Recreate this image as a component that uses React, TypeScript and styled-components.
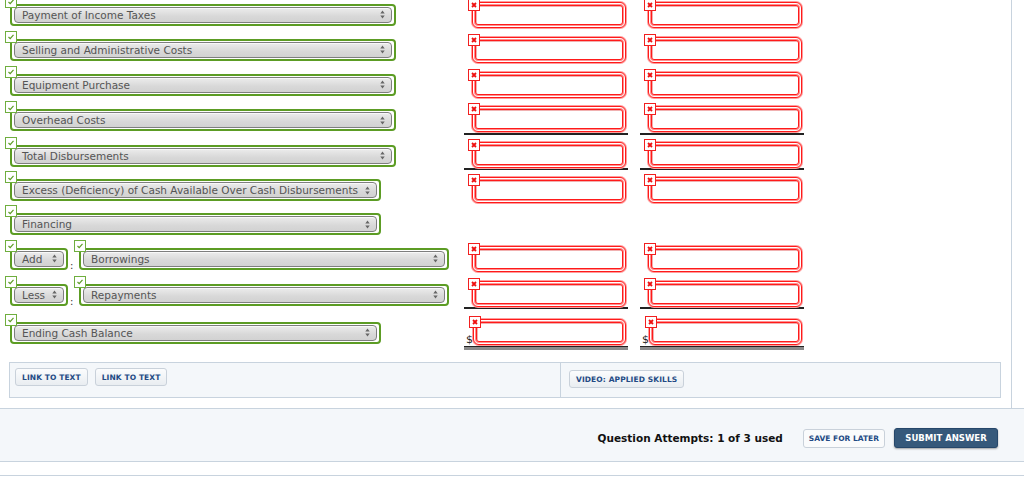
import styled, { createGlobalStyle } from "styled-components";

const GlobalStyle = createGlobalStyle`
  html, body {
    margin: 0;
    padding: 0;
    background: #fff;
    overflow: hidden;
  }
  body {
    font-family: "DejaVu Sans", Verdana, sans-serif;
  }
`;

const Page = styled.div`
  width: 1024px;
  height: 477px;
  overflow: hidden;
`;

const Content = styled.div`
  width: 1011px;
  border-right: 1px solid #c8d3de;
  padding-bottom: 10px;
`;

const Sheet = styled.div`
  margin-top: -3px;
  padding-left: 10px;
`;

const Row = styled.div<{ h: number }>`
  display: grid;
  grid-template-columns: 442px 164px 164px;
  column-gap: 12px;
  align-items: center;
  height: ${(p) => p.h}px;
`;

const LabelCell = styled.div`
  display: flex;
  align-items: center;
  height: 29px;
`;

const ValueCell = styled.div<{ line?: "single" | "double" }>`
  display: flex;
  align-items: center;
  height: 29px;
  padding: 0 2px;
  box-sizing: border-box;
  border-bottom: ${(p) =>
    p.line === "single"
      ? "2px solid #222"
      : p.line === "double"
      ? "1px solid #222"
      : "none"};
  box-shadow: ${(p) => (p.line === "double" ? "0 3px 0 #8a8a8a" : "none")};
`;

const GreenWrap = styled.div<{ w: number }>`
  position: relative;
  width: ${(p) => p.w}px;
  height: 22px;
  box-sizing: border-box;
  border: 2px solid #5c9c24;
  border-radius: 4px;
  padding: 1px 2px;
`;

const Badge = styled.span<{ tone: "ok" | "bad" }>`
  position: absolute;
  width: 12px;
  height: 12px;
  box-sizing: border-box;
  background: #fff;
  border: 1px solid ${(p) => (p.tone === "ok" ? "#6fae3e" : "#f21f1f")};
  left: ${(p) => (p.tone === "ok" ? "-7px" : "-5px")};
  top: ${(p) => (p.tone === "ok" ? "-10px" : "-4px")};
  display: flex;
  align-items: center;
  justify-content: center;
  z-index: 1;
`;

const SelectBox = styled.div`
  display: flex;
  align-items: center;
  justify-content: space-between;
  height: 16px;
  box-sizing: border-box;
  padding: 0 6px 0 7px;
  border: 1px solid #7e7e7e;
  border-radius: 4px;
  background: linear-gradient(#ececec, #d8d8d8 60%, #d2d2d2);
  box-shadow: inset 0 1px 0 #f8f8f8;
  color: #555;
  font-size: 10.5px;
  white-space: nowrap;
`;

const Colon = styled.span`
  align-self: flex-end;
  width: 11px;
  padding-left: 2px;
  box-sizing: border-box;
  font-size: 10px;
  color: #333;
  line-height: 10px;
  margin-bottom: 2px;
`;

const RedWrap = styled.div`
  position: relative;
  margin-left: auto;
  width: 154px;
  height: 26px;
  box-sizing: border-box;
  border: 1px solid #ff1a1a;
  border-radius: 6px;
  padding: 2px;
  background: #fff;
  box-shadow: 0 0 0 1px #ff9c9c;
`;

const Field = styled.div`
  height: 100%;
  box-sizing: border-box;
  border: 1px solid #ff1a1a;
  border-radius: 3px;
  box-shadow: 0 0 0 1px #ff8f8f, inset 1px 1px 0 #f0b0b0;
  background: #fff;
`;

const Dollar = styled.span`
  align-self: flex-end;
  font-size: 11px;
  line-height: 11px;
  color: #222;
  margin-bottom: 1px;
`;

const Panel = styled.div`
  margin: 10px 10px 0 9px;
  display: grid;
  grid-template-columns: 550px 1fr;
  height: 36px;
  box-sizing: border-box;
  border: 1px solid #c8d3de;
  background: #f4f7fa;
`;

const PanelSection = styled.div<{ divided?: boolean }>`
  display: flex;
  align-items: flex-start;
  gap: 7px;
  padding: ${(p) => (p.divided ? "7px 8px" : "5px 5px")};
  border-left: ${(p) => (p.divided ? "1px solid #c8d3de" : "none")};
`;

const LinkButton = styled.button`
  font-family: "DejaVu Sans", Verdana, sans-serif;
  font-weight: bold;
  font-size: 7.5px;
  color: #234a84;
  height: 18px;
  padding: 0 6px;
  border: 1px solid #c9d1da;
  border-radius: 3px;
  background: linear-gradient(#fbfcfd, #e9edf1);
  letter-spacing: 0.1px;
`;

const Footer = styled.div`
  display: flex;
  align-items: center;
  justify-content: flex-end;
  gap: 9px;
  height: 54px;
  box-sizing: border-box;
  padding: 6px 26px 0 0;
  background: #f4f7fa;
  border-top: 1px solid #c8d3de;
  border-bottom: 1px solid #c8d3de;
`;

const Attempts = styled.span`
  font-size: 10.5px;
  font-weight: bold;
  color: #111;
  margin-right: 11px;
`;

const SaveButton = styled.button`
  font-family: "DejaVu Sans", Verdana, sans-serif;
  font-weight: bold;
  font-size: 7.5px;
  color: #234a84;
  height: 19px;
  padding: 0 5px;
  border: 1px solid #c9d1da;
  border-radius: 3px;
  background: #fafbfc;
`;

const SubmitButton = styled.button`
  font-family: "DejaVu Sans", Verdana, sans-serif;
  font-weight: bold;
  font-size: 8.5px;
  color: #fff;
  height: 20px;
  width: 104px;
  border: 1px solid #26476a;
  border-radius: 3px;
  background: #36597b;
  box-shadow: 0 1px 2px rgba(0, 0, 0, 0.35);
`;

const BottomStrip = styled.div`
  height: 13px;
  border-bottom: 1px solid #c8d3de;
`;

type Line = "single" | "double";

interface SheetRow {
  label: string;
  width: number;
  h: number;
  prefix?: string;
  inputs?: boolean;
  line?: Line;
  dollar?: boolean;
}

const rows: SheetRow[] = [
  { label: "Payment of Income Taxes", width: 386, h: 35, inputs: true },
  { label: "Selling and Administrative Costs", width: 386, h: 35, inputs: true },
  { label: "Equipment Purchase", width: 386, h: 35, inputs: true },
  { label: "Overhead Costs", width: 386, h: 36, inputs: true, line: "single" },
  { label: "Total Disbursements", width: 386, h: 35, inputs: true, line: "single" },
  {
    label: "Excess (Deficiency) of Cash Available Over Cash Disbursements",
    width: 371,
    h: 34,
    inputs: true
  },
  { label: "Financing", width: 371, h: 34 },
  { prefix: "Add", label: "Borrowings", width: 370, h: 35, inputs: true },
  {
    prefix: "Less",
    label: "Repayments",
    width: 370,
    h: 37,
    inputs: true,
    line: "single"
  },
  {
    label: "Ending Cash Balance",
    width: 371,
    h: 39,
    inputs: true,
    line: "double",
    dollar: true
  }
];

const Check = () => (
  <svg width="8" height="7" viewBox="0 0 8 7">
    <polyline
      points="1.5,4 3.2,5.6 6.5,1.8"
      fill="none"
      stroke="#5c9c24"
      strokeWidth="1.2"
    />
  </svg>
);

const Cross = () => (
  <svg width="6" height="6" viewBox="0 0 6 6">
    <path d="M1 1 L5 5 M5 1 L1 5" stroke="#ee1111" strokeWidth="1.8" />
  </svg>
);

const Arrows = () => (
  <svg width="5" height="9" viewBox="0 0 5 9">
    <path d="M2.5 0.5 L4.7 3.5 H0.3 Z M2.5 8.5 L4.7 5.5 H0.3 Z" fill="#666" />
  </svg>
);

function Dropdown({ text, width }: { text: string; width: number }) {
  return (
    <GreenWrap w={width}>
      <Badge tone="ok">
        <Check />
      </Badge>
      <SelectBox>
        <span>{text}</span>
        <Arrows />
      </SelectBox>
    </GreenWrap>
  );
}

function AmountInput() {
  return (
    <RedWrap>
      <Badge tone="bad">
        <Cross />
      </Badge>
      <Field />
    </RedWrap>
  );
}

function App() {
  return (
    <Page>
      <GlobalStyle />
      <Content>
        <Sheet>
          {rows.map((row) => (
            <Row key={row.label} h={row.h}>
              <LabelCell>
                {row.prefix && (
                  <>
                    <Dropdown text={row.prefix} width={58} />
                    <Colon>:</Colon>
                  </>
                )}
                <Dropdown text={row.label} width={row.width} />
              </LabelCell>
              {row.inputs &&
                [0, 1].map((col) => (
                  <ValueCell key={col} line={row.line}>
                    {row.dollar && <Dollar>$</Dollar>}
                    <AmountInput />
                  </ValueCell>
                ))}
            </Row>
          ))}
        </Sheet>
        <Panel>
          <PanelSection>
            <LinkButton>LINK TO TEXT</LinkButton>
            <LinkButton>LINK TO TEXT</LinkButton>
          </PanelSection>
          <PanelSection divided>
            <LinkButton>VIDEO: APPLIED SKILLS</LinkButton>
          </PanelSection>
        </Panel>
      </Content>
      <Footer>
        <Attempts>Question Attempts: 1 of 3 used</Attempts>
        <SaveButton>SAVE FOR LATER</SaveButton>
        <SubmitButton>SUBMIT ANSWER</SubmitButton>
      </Footer>
      <BottomStrip />
    </Page>
  );
}

export default App;
